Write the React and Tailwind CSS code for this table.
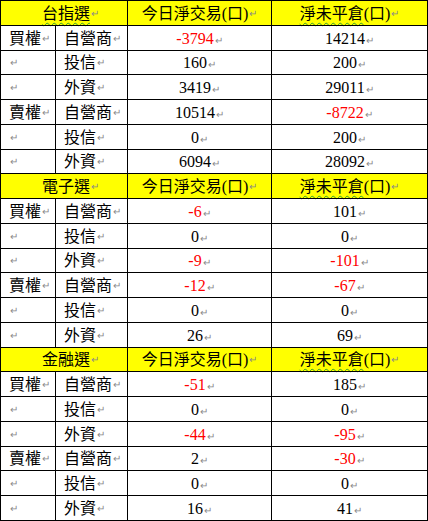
import React from 'react';

const sections = [
  {
    title: '台指選',
    wavy: true,
    rows: [
      ['買權', '自營商', '-3794', '14214'],
      ['', '投信', '160', '200'],
      ['', '外資', '3419', '29011'],
      ['賣權', '自營商', '10514', '-8722'],
      ['', '投信', '0', '200'],
      ['', '外資', '6094', '28092'],
    ],
  },
  {
    title: '電子選',
    wavy: false,
    rows: [
      ['買權', '自營商', '-6', '101'],
      ['', '投信', '0', '0'],
      ['', '外資', '-9', '-101'],
      ['賣權', '自營商', '-12', '-67'],
      ['', '投信', '0', '0'],
      ['', '外資', '26', '69'],
    ],
  },
  {
    title: '金融選',
    wavy: false,
    rows: [
      ['買權', '自營商', '-51', '185'],
      ['', '投信', '0', '0'],
      ['', '外資', '-44', '-95'],
      ['賣權', '自營商', '2', '-30'],
      ['', '投信', '0', '0'],
      ['', '外資', '16', '41'],
    ],
  },
];

function Mark() {
  return <span className="text-[10px] text-[#8a8a8a] ml-[1px]">↵</span>;
}

function Num({ v }) {
  return (
    <span className={v.startsWith('-') ? 'text-[#ff0000]' : 'text-black'}>
      {v}
      <Mark />
    </span>
  );
}

const wavy = 'underline decoration-wavy decoration-[#2e9e2e] decoration-1 underline-offset-[3px]';
const base = 'h-[24.75px] border-l border-t border-black flex items-center pt-[2px]';

export default function App() {
  return (
    <div className="w-[428px] h-[521px] bg-white overflow-hidden" style={{ fontFamily: '"Liberation Serif", "Noto Sans CJK TC", serif' }}>
      <div className="grid grid-cols-[55px_72px_144px_157px] border-b border-black text-[16px] leading-none text-black">
        {sections.map((s) => (
          <React.Fragment key={s.title}>
            <div className={`${base} col-span-2 pl-[41px] bg-[#ffff00]`}>
              <span className={s.wavy ? wavy : ''}>{s.title}</span>
              <Mark />
            </div>
            <div className={`${base} justify-center bg-[#ffff00]`}>
              今日淨交易(口)
              <Mark />
            </div>
            <div className={`${base} justify-center bg-[#ffff00] border-r`}>
              <span className={wavy}>淨未平倉</span>(口)
              <Mark />
            </div>
            {s.rows.map((r, i) => (
              <React.Fragment key={i}>
                <div className={`${base} pl-[8px]`}>
                  {r[0]}
                  <Mark />
                </div>
                <div className={`${base} pl-[8px]`}>
                  {r[1]}
                  <Mark />
                </div>
                <div className={`${base} justify-center`}>
                  <Num v={r[2]} />
                </div>
                <div className={`${base} justify-center border-r`}>
                  <Num v={r[3]} />
                </div>
              </React.Fragment>
            ))}
          </React.Fragment>
        ))}
      </div>
    </div>
  );
}
